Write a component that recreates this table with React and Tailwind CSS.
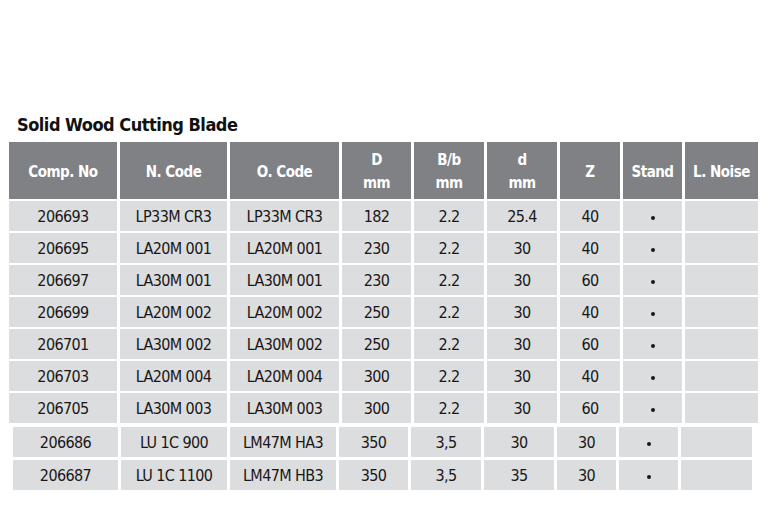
import React from 'react';

const head = [
  ['Comp. No'],
  ['N. Code'],
  ['O. Code'],
  ['D', 'mm'],
  ['B/b', 'mm'],
  ['d', 'mm'],
  ['Z'],
  ['Stand'],
  ['L. Noise'],
];

const rowsA = [
  ['206693', 'LP33M CR3', 'LP33M CR3', '182', '2.2', '25.4', '40', '•', ''],
  ['206695', 'LA20M 001', 'LA20M 001', '230', '2.2', '30', '40', '•', ''],
  ['206697', 'LA30M 001', 'LA30M 001', '230', '2.2', '30', '60', '•', ''],
  ['206699', 'LA20M 002', 'LA20M 002', '250', '2.2', '30', '40', '•', ''],
  ['206701', 'LA30M 002', 'LA30M 002', '250', '2.2', '30', '60', '•', ''],
  ['206703', 'LA20M 004', 'LA20M 004', '300', '2.2', '30', '40', '•', ''],
  ['206705', 'LA30M 003', 'LA30M 003', '300', '2.2', '30', '60', '•', ''],
];

const rowsB = [
  ['206686', 'LU 1C 900', 'LM47M HA3', '350', '3,5', '30', '30', '•', ''],
  ['206687', 'LU 1C 1100', 'LM47M HB3', '350', '3,5', '35', '30', '•', ''],
];

const Cell = ({ value }) => (
  <div className="h-[30px] bg-[#dcdddf] flex items-center justify-center pt-[2px] text-[16px] tracking-[-0.6px] text-[#1a1718]">
    {value === '•' ? <span className="block w-[4px] h-[4px] rounded-full bg-[#1a1718] mt-[2px]" /> : value}
  </div>
);

const App = () => {
  return (
    <div className="w-[768px] h-[531px] bg-white font-['DejaVu_Sans_Condensed','DejaVu_Sans',sans-serif] pt-[110px]">
      <h1 className="pl-[17px] text-[18px] font-bold tracking-[-0.5px] leading-[30px] text-[#111]">Solid Wood Cutting Blade</h1>

      <div className="ml-[9px] mt-[2px] grid grid-cols-[108px_107px_109px_69px_70px_70px_60px_59px_73px] gap-x-[3px] gap-y-[2px] w-[749px]">
        {head.map((h, i) => (
          <div key={i} className="h-[57px] bg-[#808184] flex flex-col items-center justify-center pt-[3px] text-white font-bold text-[15px] tracking-[-0.5px] leading-[23px]">
            {h.map((t) => <span key={t}>{t}</span>)}
          </div>
        ))}
        {rowsA.map((r, i) => r.map((v, j) => <Cell key={i + '-' + j} value={v} />))}
      </div>

      <div className="ml-[13px] mt-[4px] grid grid-cols-[105px_106px_106px_69px_70px_70px_59px_59px_71px] gap-x-[3px] gap-y-[3px] w-[739px]">
        {rowsB.map((r, i) => r.map((v, j) => <Cell key={i + '-' + j} value={v} />))}
      </div>
    </div>
  );
};

export default App;
